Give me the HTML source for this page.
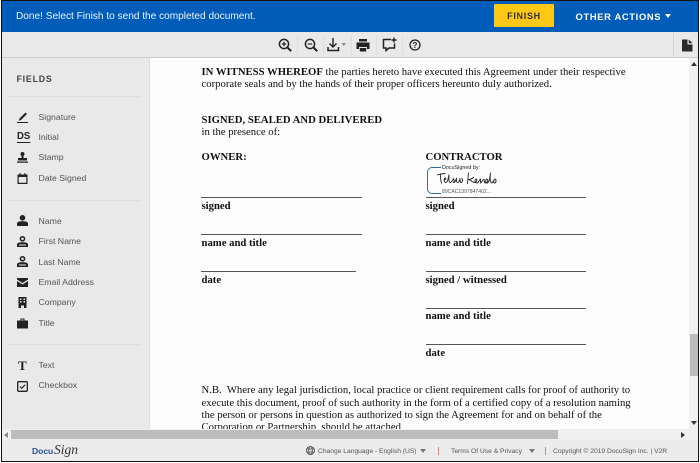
<!DOCTYPE html>
<html><head><meta charset="utf-8">
<style>
html,body{margin:0;padding:0}
body{width:700px;height:463px;position:relative;overflow:hidden;background:#fff;font-family:"Liberation Sans",sans-serif}
div,span,svg{position:absolute}
.t{white-space:nowrap}
.d{font-family:"Liberation Serif",serif;font-size:10.7px;color:#111;white-space:nowrap;line-height:13px}
.b{font-weight:bold}
.l{height:1px;background:#555}
.f{font-size:8.7px;color:#555;left:38.5px;white-space:nowrap;line-height:11px}
.i{left:17px;width:11px;height:11px;fill:#222}
.sep{top:36px;width:1px;height:19px;background:#dedede}
.ft{font-size:6.7px;color:#555;white-space:nowrap;top:447px;line-height:9px}
</style></head><body>
<div style="left:0;top:0;width:700px;height:32px;background:#005cb9"></div>
<div class="t" style="left:16px;top:10px;font-size:10.1px;line-height:13px;color:#eef4fb">Done! Select Finish to send the completed document.</div>
<div style="left:494px;top:4px;width:60px;height:23px;background:#ffc817;border-radius:1px"></div>
<div class="t" style="left:494px;width:60px;text-align:center;top:11px;font-size:9px;line-height:11px;font-weight:bold;letter-spacing:.7px;color:#333">FINISH</div>
<div class="t" style="left:575.5px;top:11px;font-size:9.4px;line-height:11px;font-weight:bold;letter-spacing:.65px;color:#fff">OTHER ACTIONS</div>
<svg style="left:665px;top:14px" width="6" height="4"><path d="M0 0H6L3 4Z" fill="#fff"/></svg>

<div style="left:0;top:32px;width:700px;height:25px;background:#e9e9e9;border-bottom:1px solid #ccc"></div>
<svg style="left:278px;top:38px" width="14" height="14" fill="none" stroke="#222" stroke-width="1.5"><circle cx="6" cy="6" r="4.6"/><path d="M9.5 9.5L13.2 13.2" stroke-width="2"/><path d="M3.8 6H8.2M6 3.8V8.2" stroke-width="1.2"/></svg>
<div class="sep" style="left:297px"></div>
<svg style="left:304px;top:38px" width="14" height="14" fill="none" stroke="#222" stroke-width="1.5"><circle cx="6" cy="6" r="4.6"/><path d="M9.5 9.5L13.2 13.2" stroke-width="2"/><path d="M3.8 6H8.2" stroke-width="1.2"/></svg>
<div class="sep" style="left:323px"></div>
<svg style="left:327px;top:38px" width="21" height="14" fill="none"><path d="M6 0V9M2.5 5.5L6 9L9.5 5.5" stroke="#222" stroke-width="1.4"/><path d="M1 9V12.5H11.5V9" stroke="#222" stroke-width="1.5"/><path d="M14.5 5H19L16.7 8Z" fill="#888"/></svg>
<div class="sep" style="left:351px"></div>
<svg style="left:356px;top:39px" width="14" height="13"><path d="M3 0H11V2.5H3ZM0.5 3.5H13.5V10H11V8H3V10H0.5ZM3.8 9H10.2V12.5H3.8Z" fill="#222"/></svg>
<div class="sep" style="left:376px"></div>
<svg style="left:382px;top:37px" width="16" height="15" fill="none"><path d="M9 2.5H1.5V11H4V13.5L7 11H12.5V6.5" stroke="#222" stroke-width="1.5"/><path d="M12 0.5V5.5M9.5 3H14.5" stroke="#222" stroke-width="1.4"/></svg>
<div class="sep" style="left:402px"></div>
<svg style="left:409px;top:39px" width="12" height="12" fill="none"><circle cx="6" cy="6" r="5" stroke="#222" stroke-width="1.3"/><text x="6" y="8.8" font-family="Liberation Sans" font-size="8" font-weight="bold" fill="#222" text-anchor="middle">?</text></svg>
<div class="sep" style="left:673px;top:33px;height:23px;background:#d5d5d5"></div>
<svg style="left:681px;top:39px" width="12" height="13"><path d="M1 0.5H6.5V5.5H11.5V12.5H1ZM7.7 0.5L11.5 4.3H7.7Z" fill="#2a2a2a"/></svg>

<div style="left:0;top:58px;width:149px;height:371px;background:#e9e9e9;border-right:1px solid #ddd"></div>
<div style="left:150px;top:58px;width:539px;height:371px;background:#fdfdfd"></div>
<div class="t" style="left:16.5px;top:74px;font-size:8.8px;line-height:11px;font-weight:bold;letter-spacing:.8px;color:#444">FIELDS</div>
<div style="left:7px;top:96px;width:133px;height:1px;background:#ddd"></div>
<div style="left:7px;top:200px;width:133px;height:1px;background:#ddd"></div>
<div style="left:7px;top:344px;width:133px;height:1px;background:#ddd"></div>

<svg class="i" style="top:112px" viewBox="0 0 11 11"><path d="M8.5 0.5L10 2L4 8L1.8 8.6L2.5 6.5Z"/><path d="M0 10H11V11H0Z"/></svg>
<div class="f" style="top:112px">Signature</div>
<div class="t" style="left:17px;top:131px;font-size:10px;line-height:11px;font-weight:bold;color:#222;border-bottom:1px solid #222;transform:scaleX(.95);transform-origin:left">DS</div>
<div class="f" style="top:132px">Initial</div>
<svg class="i" style="top:152px" viewBox="0 0 11 11"><circle cx="5.5" cy="2" r="2"/><path d="M4.5 3H6.5V6H10V8.5H1V6H4.5ZM0 9.5H11V10.8H0Z"/></svg>
<div class="f" style="top:152px">Stamp</div>
<svg class="i" style="top:173px" viewBox="0 0 11 11"><path d="M0.5 1.5H2.5V0.3H3.8V1.5H7.2V0.3H8.5V1.5H10.5V11H0.5ZM1.7 4V9.8H9.3V4Z"/></svg>
<div class="f" style="top:173px">Date Signed</div>

<svg class="i" style="top:215px" viewBox="0 0 11 11"><circle cx="5.5" cy="2.8" r="2.8"/><path d="M0 11V8.5C0 7 2 6.3 5.5 6.3S11 7 11 8.5V11Z"/></svg>
<div class="f" style="top:215.5px">Name</div>
<svg class="i" style="top:236px" viewBox="0 0 11 11"><path fill-rule="evenodd" d="M5.5 0a2.8 2.8 0 1 1-.01 0ZM5.5 1.5a1.3 1.3 0 1 0 .01 0ZM0 11V8.5C0 7 2 6.3 5.5 6.3S11 7 11 8.5V11ZM2 9.5H9V8.5H2Z"/></svg>
<div class="f" style="top:236px">First Name</div>
<svg class="i" style="top:256px" viewBox="0 0 11 11"><path fill-rule="evenodd" d="M5.5 0a2.8 2.8 0 1 1-.01 0ZM5.5 1.5a1.3 1.3 0 1 0 .01 0ZM0 11V8.5C0 7 2 6.3 5.5 6.3S11 7 11 8.5V11ZM2 9.5H9V8.5H2Z"/></svg>
<div class="f" style="top:256.5px">Last Name</div>
<svg class="i" style="top:278px;height:9px" viewBox="0 0 11 9"><path d="M0 0H11V1.5L5.5 5L0 1.5ZM0 3L5.5 6.5L11 3V9H0Z"/></svg>
<div class="f" style="top:276.5px">Email Address</div>
<svg class="i" style="top:297px" viewBox="0 0 11 11"><path fill-rule="evenodd" d="M1.5 0H9.5V11H7V8.5H4V11H1.5ZM3 1.5V3H4.5V1.5ZM6.5 1.5V3H8V1.5ZM3 4V5.5H4.5V4ZM6.5 4V5.5H8V4Z"/></svg>
<div class="f" style="top:297px">Company</div>
<svg class="i" style="top:318px" viewBox="0 0 11 11"><path fill-rule="evenodd" d="M3.5 2.5V0.5H7.5V2.5H11V10.5H0V2.5ZM4.5 1.5V2.5H6.5V1.5Z"/></svg>
<div class="f" style="top:317.5px">Title</div>

<div class="t" style="left:18px;top:359px;font-family:'Liberation Serif',serif;font-size:13px;line-height:14px;font-weight:bold;color:#222">T</div>
<div class="f" style="top:360px">Text</div>
<svg style="left:17px;top:381px;width:11px;height:11px" viewBox="0 0 11 11"><rect x="0.7" y="0.7" width="9.6" height="9.6" rx="1" fill="none" stroke="#222" stroke-width="1.3"/><path d="M3 5.5L4.8 7.3L8 3.8" fill="none" stroke="#222" stroke-width="1.2"/></svg>
<div class="f" style="top:380px">Checkbox</div>

<div class="d" style="left:201.5px;top:66px"><span class="b" style="position:static">IN WITNESS WHEREOF</span> the parties hereto have executed this Agreement under their respective</div>
<div class="d" style="left:201.5px;top:78px">corporate seals and by the hands of their proper officers hereunto duly authorized.</div>
<div class="d b" style="left:201.5px;top:114px">SIGNED, SEALED AND DELIVERED</div>
<div class="d" style="left:201.5px;top:126px">in the presence of:</div>
<div class="d b" style="left:201.5px;top:151px">OWNER:</div>
<div class="d b" style="left:425.5px;top:151px">CONTRACTOR</div>

<div style="left:427px;top:167px;width:20px;height:25px;border:1px solid #2c6cb0;border-right:0;border-radius:5px 0 0 5px"></div>
<div class="t" style="left:441px;top:164.5px;font-size:5.4px;line-height:6px;color:#222;background:#fdfdfd;padding:0 1px">DocuSigned by:</div>
<div class="t" style="left:441px;top:189px;font-size:5.1px;line-height:6px;color:#555;background:#fdfdfd;padding:0 1px">89CAC1397847402...</div>
<svg style="left:434px;top:170px" width="66" height="18" fill="none" stroke="#222" stroke-width=".9"><path d="M3 5C6 4 9 3.5 11.5 3.5M6.5 4C6.3 8 6.6 11 7.8 13.5"/><path d="M9.5 10C11.5 10 12.5 8 11.3 8C9.8 8 9.8 12.5 12 12.5C13.5 12.5 14.3 8.5 15 4.5C14.6 9 14.8 12.5 16.3 12.5C17.8 12.5 18.5 9.5 20 8.5C19 10 21.5 10.5 19.5 12.5C21.5 12.8 22 9 22.5 8.5C22.3 11 22.6 12.7 24 12.5C25.5 12 25.5 9.5 26 8.5C25.8 11 26.3 12.7 27.5 12.5C29 12 28.5 8.5 27.5 8.5"/><path d="M34.5 2.5L33.5 14M40 7C38 9 36 9.5 34.5 9.5C36.5 10 38 12 40.5 12.5C42.5 12.5 43.5 9.5 42.3 9C40.5 9 40.5 13 43 13C45 13 45 9.5 46.5 9C46.5 11 46.2 12.5 46.8 13C48 11.5 49 9 50 9.5C50.5 11 50 13 51.5 13C54 12.5 54.5 9 52.8 9C51 9.5 51.5 13.5 53.5 13C55.5 12 56 7 56.5 2.5C56 7 56 12 57.5 13C59 12.5 60 9.5 61 9C62.5 9.5 62.5 13 60.5 13C59 12.5 59.5 10 61 9.5"/></svg>

<div class="l" style="left:201px;top:197px;width:161px"></div>
<div class="l" style="left:426px;top:197px;width:160px"></div>
<div class="d b" style="left:201.5px;top:200px">signed</div>
<div class="d b" style="left:425.5px;top:200px">signed</div>
<div class="l" style="left:201px;top:234px;width:161px"></div>
<div class="l" style="left:426px;top:234px;width:160px"></div>
<div class="d b" style="left:201.5px;top:237px">name and title</div>
<div class="d b" style="left:425.5px;top:237px">name and title</div>
<div class="l" style="left:201px;top:271px;width:155px"></div>
<div class="l" style="left:426px;top:271px;width:160px"></div>
<div class="d b" style="left:201.5px;top:274px">date</div>
<div class="d b" style="left:425.5px;top:274px">signed / witnessed</div>
<div class="l" style="left:426px;top:308px;width:160px"></div>
<div class="d b" style="left:425.5px;top:310px">name and title</div>
<div class="l" style="left:426px;top:344px;width:160px"></div>
<div class="d b" style="left:425.5px;top:347px">date</div>

<div class="d" style="left:201.5px;top:384px">N.B.&nbsp; Where any legal jurisdiction, local practice or client requirement calls for proof of authority to</div>
<div class="d" style="left:201.5px;top:397px">execute this document, proof of such authority in the form of a certified copy of a resolution naming</div>
<div class="d" style="left:201.5px;top:409px">the person or persons in question as authorized to sign the Agreement for and on behalf of the</div>
<div class="d" style="left:201.5px;top:421px">Corporation or Partnership, should be attached</div>

<div style="left:689px;top:58px;width:11px;height:371px;background:#f0f0f0"></div>
<svg style="left:691px;top:62px" width="6" height="4"><path d="M0 4H6L3 0Z" fill="#333"/></svg>
<svg style="left:691px;top:421px" width="6" height="4"><path d="M0 0H6L3 4Z" fill="#333"/></svg>
<div style="left:690px;top:334px;width:8px;height:42px;background:#bdbdbd"></div>

<div style="left:0;top:429px;width:700px;height:11px;background:#f0f0f0"></div>
<div style="left:11px;top:430px;width:547px;height:9px;background:#bdbdbd"></div>
<svg style="left:4px;top:432px" width="4" height="6"><path d="M4 0V6L0 3Z" fill="#888"/></svg>
<svg style="left:681px;top:432px" width="4" height="6"><path d="M0 0V6L4 3Z" fill="#333"/></svg>
<div style="left:0;top:440px;width:700px;height:23px;background:#ececec"></div>

<div class="t" style="left:32px;top:446px;font-size:8.5px;line-height:11px;font-weight:bold;color:#1f4e9c">Docu</div>
<div class="t" style="left:54px;top:443px;font-family:'Liberation Serif',serif;font-style:italic;font-size:13.5px;line-height:14px;color:#333">Sign</div>

<svg style="left:306px;top:446px" width="9" height="9" fill="none" stroke="#444" stroke-width=".8"><circle cx="4.5" cy="4.5" r="4"/><ellipse cx="4.5" cy="4.5" rx="1.8" ry="4"/><path d="M0.5 3H8.5M0.5 6H8.5"/></svg>
<div class="ft" style="left:318px">Change Language - English (US)</div>
<svg style="left:420px;top:449px" width="6" height="4"><path d="M0 0H6L3 4Z" fill="#777"/></svg>
<div style="left:438px;top:447px;width:1px;height:8px;background:#c88"></div>
<div class="ft" style="left:451px">Terms Of Use &amp; Privacy</div>
<svg style="left:529px;top:449px" width="6" height="4"><path d="M0 0H6L3 4Z" fill="#777"/></svg>
<div style="left:545px;top:447px;width:1px;height:8px;background:#c88"></div>
<div class="ft" style="left:553px">Copyright © 2019 DocuSign Inc. | V2R</div>

<div style="left:699px;top:0;width:1px;height:463px;background:#fff"></div>
<div style="left:0;top:462px;width:700px;height:1px;background:#fff"></div>
<div style="left:0;top:0;width:1px;height:463px;background:#fff"></div>
<div style="left:1px;top:0;width:696px;height:460px;border:1px solid #111"></div>
</body></html>
